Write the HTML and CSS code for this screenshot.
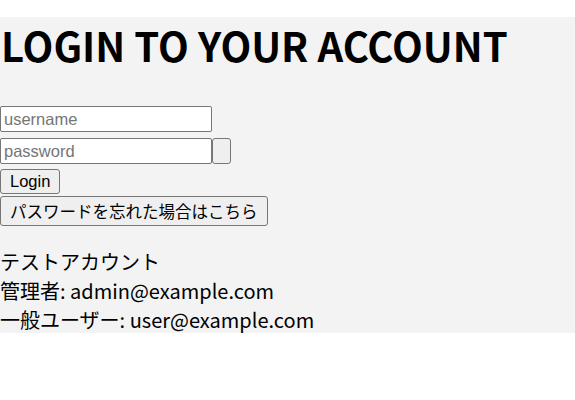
FILE: index.html
```html
<!DOCTYPE html>
<html lang="ja">
<head>
<meta charset="utf-8">
<title>Login</title>
<link rel="stylesheet" href="styles.css">
</head>
<body>
<main class="page">
  <h1 class="title">LOGIN TO YOUR ACCOUNT</h1>
  <form class="form">
    <input class="field" type="text" placeholder="username">
    <div class="pw-row">
      <input class="field" type="password" placeholder="password">
      <button class="toggle" type="button"></button>
    </div>
    <button class="btn" type="submit">Login</button>
    <button class="btn btn-jp" type="button">パスワードを忘れた場合はこちら</button>
  </form>
  <div class="accounts">
    <p>テストアカウント</p>
    <p>管理者: admin@example.com</p>
    <p>一般ユーザー: user@example.com</p>
  </div>
</main>
</body>
</html>
```
FILE: styles.css
```css
html, body {
  margin: 0;
  padding: 0;
  background: #ffffff;
}
.page {
  margin-top: 17px;
  background: #f3f3f3;
  font-family: "Noto Sans CJK JP", "Noto Sans", sans-serif;
  font-size: 20px;
  color: #000;
  height: 316px;
  box-sizing: border-box;
}
.title {
  margin: 0;
  padding-left: 1px;
  font-size: 40px;
  font-weight: 700;
  line-height: 57px;
}
.form {
  margin-top: 32px;
  display: flex;
  flex-direction: column;
  align-items: flex-start;
}
.field {
  box-sizing: border-box;
  width: 212px;
  height: 26px;
  margin: 0;
  padding: 1px 3px;
  border: 1px solid #767676;
  border-radius: 2px;
  background: #fff;
  font-family: "Liberation Sans", Arial, sans-serif;
  font-size: 16.5px;
}
.field::placeholder {
  color: #757575;
}
.pw-row {
  display: flex;
  margin-top: 6px;
}
.toggle {
  box-sizing: border-box;
  width: 19px;
  height: 26px;
  margin: 0;
  padding: 0;
  border: 1px solid #767676;
  border-radius: 3px;
  background: #efefef;
}
.btn {
  box-sizing: border-box;
  height: 25px;
  margin: 5px 0 0;
  padding: 0 9px;
  border: 1px solid #767676;
  border-radius: 3px;
  background: #efefef;
  color: #000;
  font-family: "Liberation Sans", Arial, sans-serif;
  font-size: 16.5px;
}
.btn-jp {
  height: 30px;
  margin-top: 2px;
  font-family: "Liberation Sans", "Noto Sans CJK JP", sans-serif;
}
.accounts {
  margin-top: 21px;
}
.accounts p {
  margin: 0;
  line-height: 29px;
}
```
